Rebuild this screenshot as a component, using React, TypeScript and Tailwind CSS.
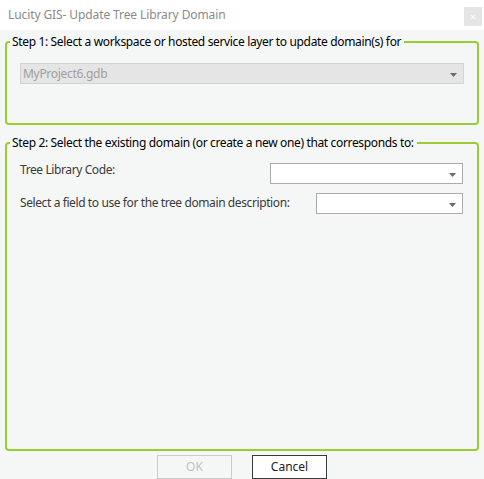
import React from 'react'

function Caret({ className }: { className?: string }) {
  return (
    <svg width="7" height="4" viewBox="0 0 7 4" className={className}>
      <path d="M0 0h7L3.5 4z" fill="#6b6b6b" />
    </svg>
  )
}

function Combo({ value, disabled, className }: { value?: string; disabled?: boolean; className?: string }) {
  return (
    <div
      className={
        'flex h-[21px] items-center justify-between border pl-[2px] pr-[6px] ' +
        (disabled ? 'border-[#d4d4d4] bg-[#e5e5e5] text-[#a0a0a0] ' : 'border-[#ababab] bg-white text-[#333] ') +
        (className ?? '')
      }
    >
      <span className="whitespace-nowrap text-[12px] leading-none tracking-[-0.3px]">{value}</span>
      <Caret className="mt-[2px]" />
    </div>
  )
}

export default function App() {
  return (
    <div
      className="flex h-[479px] w-[484px] flex-col bg-[#f5f7f6] text-[#1f1f1f]"
      style={{ fontFamily: '"Noto Sans", "Open Sans", sans-serif' }}
    >
      {/* Title bar */}
      <div className="flex h-[30px] shrink-0 items-center justify-between bg-white pl-[8px] pr-[2px]">
        <span className="whitespace-nowrap text-[12px] tracking-[-0.1px] text-[#8a8a8a]">
          Lucity GIS- Update Tree Library Domain
        </span>
        <div className="mb-[-3px] flex h-[19px] w-[18px] items-center justify-center bg-[#e5e5e5] text-[11px] leading-none text-white">
          ×
        </div>
      </div>

      <div className="flex flex-1 flex-col px-[5px] pt-[2px]">
        {/* Step 1 */}
        <fieldset className="h-[93px] rounded-[4px] border-2 border-[#9acd32]">
          <legend className="ml-[3px] whitespace-nowrap pl-[2px] pr-[3px] text-[12px] leading-[20px] tracking-[-0.35px] text-black">
            Step 1: Select a workspace or hosted service layer to update domain(s) for
          </legend>
          <div className="mt-[11px] ml-[13px] mr-[13px]">
            <Combo value="MyProject6.gdb" disabled />
          </div>
        </fieldset>

        {/* Step 2 */}
        <fieldset className="mt-[8px] h-[318px] rounded-[4px] border-2 border-[#9acd32]">
          <legend className="ml-[3px] whitespace-nowrap pl-[2px] pr-[3px] text-[12px] leading-[20px] tracking-[-0.35px] text-black">
            Step 2: Select the existing domain (or create a new one) that corresponds to:
          </legend>
          <div className="mt-[9px] ml-[13px] mr-[14px] flex flex-col gap-[9px]">
            <div className="flex items-start justify-between">
              <span className="whitespace-nowrap text-[12px] leading-[16px] tracking-[-0.4px] text-[#3a3a3a]">
                Tree Library Code:
              </span>
              <Combo className="mt-[1px] w-[193px]" />
            </div>
            <div className="flex items-start justify-between">
              <span className="whitespace-nowrap pt-[2px] text-[12px] leading-[16px] tracking-[-0.4px] text-[#3a3a3a]">
                Select a field to use for the tree domain description:
              </span>
              <Combo className="w-[147px]" />
            </div>
          </div>
        </fieldset>

        {/* Buttons */}
        <div className="mt-[4px] flex justify-center gap-[20px]">
          <button className="h-[24px] w-[75px] border border-[#cccccc] bg-[#f5f7f6] text-[12px] text-[#c2c2c2]">
            OK
          </button>
          <button className="h-[24px] w-[75px] border border-[#3a3a3a] bg-white text-[12px] text-[#222]">
            Cancel
          </button>
        </div>
      </div>
    </div>
  )
}
